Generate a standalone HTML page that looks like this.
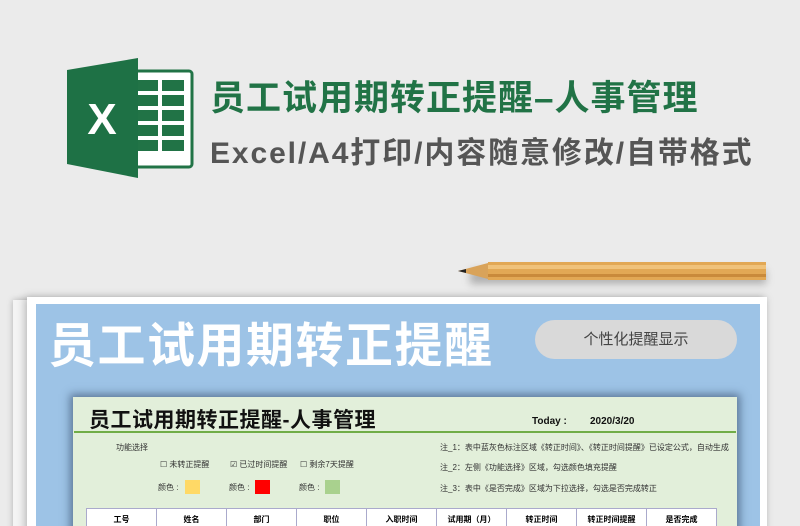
<!DOCTYPE html>
<html><head><meta charset="utf-8"><style>
*{margin:0;padding:0;box-sizing:border-box}
html,body{width:800px;height:526px;overflow:hidden}
body{background:#ebebeb;font-family:"Liberation Sans","Noto Sans CJK SC",sans-serif;position:relative}
.a{position:absolute;white-space:nowrap}
.t1{left:210px;top:70px;font-size:35px;font-weight:bold;color:#217346;letter-spacing:1px}
.t2{left:210px;top:128px;font-size:30px;font-weight:bold;color:#555;letter-spacing:1.9px}
.paper2{left:13px;top:300px;width:750px;height:240px;background:#f4f4f4;box-shadow:0 0 6px rgba(0,0,0,.25)}
.frame{left:27px;top:297px;width:740px;height:240px;background:#fff;box-shadow:-2px 0 8px rgba(0,0,0,.25)}
.blue{left:36px;top:304px;width:724px;height:230px;background:#9dc3e6}
.big{left:48px;top:306px;font-size:48px;font-weight:bold;color:#fff;letter-spacing:1.5px}
.btn{left:535px;top:320px;width:202px;height:39px;border-radius:20px;background:#d9d9d9;font-size:15px;color:#444;text-align:center;line-height:39px}
.card{left:73px;top:397px;width:664px;height:140px;background:#e2efda;box-shadow:0 0 8px 3px rgba(40,60,90,.55)}
.s{font-size:8px;color:#333}
.sw{width:15px;height:14px}
th{font-size:8px;font-weight:bold;background:#fff;border:1px solid #aac;height:30px;width:70px;text-align:center;vertical-align:top;padding-top:5px}
</style></head><body>
<svg class="a" style="left:66px;top:57px" width="128" height="122" viewBox="0 0 128 122">
<rect x="62" y="14" width="64" height="96" rx="3" fill="#fff" stroke="#217346" stroke-width="3"/>
<rect x="72" y="23" width="20" height="11" fill="#217346"/><rect x="96" y="23" width="22" height="11" fill="#217346"/>
<rect x="72" y="38" width="20" height="11" fill="#217346"/><rect x="96" y="38" width="22" height="11" fill="#217346"/>
<rect x="72" y="53" width="20" height="11" fill="#217346"/><rect x="96" y="53" width="22" height="11" fill="#217346"/>
<rect x="72" y="68" width="20" height="11" fill="#217346"/><rect x="96" y="68" width="22" height="11" fill="#217346"/>
<rect x="72" y="83" width="20" height="11" fill="#217346"/><rect x="96" y="83" width="22" height="11" fill="#217346"/>
<polygon points="1,13 72,1 72,121 1,107" fill="#1e7145"/>
<text x="36" y="77" font-family="Liberation Sans" font-weight="bold" font-size="44" fill="#fff" text-anchor="middle">X</text>
</svg>
<div class="a t1">员工试用期转正提醒–人事管理</div>
<div class="a t2">Excel/A4打印/内容随意修改/自带格式</div>
<div class="a" style="left:470px;top:270px;width:296px;height:14px;background:rgba(0,0,0,.25);filter:blur(4px)"></div>
<svg class="a" style="left:456px;top:260px" width="312" height="22"><polygon points="2,11 32,3 32,19" fill="#d9a35a"/><polygon points="2,11 10,9 10,13" fill="#222"/><rect x="32" y="2" width="278" height="18" fill="#e2a855"/><rect x="32" y="5" width="278" height="4" fill="#f0c27a"/><rect x="32" y="14" width="278" height="3" fill="#c98a3b"/></svg>
<div class="a paper2"></div>
<div class="a frame"></div>
<div class="a blue"></div>
<div class="a big">员工试用期转正提醒</div>
<div class="a btn">个性化提醒显示</div>
<div class="a card"></div>
<div class="a" style="left:89px;top:404px;font-size:21px;font-weight:bold;color:#111;letter-spacing:0.5px">员工试用期转正提醒-人事管理</div>
<div class="a" style="left:532px;top:416px;font-size:10px;font-weight:bold;color:#111">Today :</div>
<div class="a" style="left:590px;top:416px;font-size:10px;font-weight:bold;color:#111">2020/3/20</div>
<div class="a" style="left:74px;top:431px;width:662px;height:2px;background:#70ad47"></div>
<div class="a s" style="left:116px;top:442px">功能选择</div>
<div class="a s" style="left:160px;top:459px">☐ 未转正提醒</div>
<div class="a s" style="left:230px;top:459px">☑ 已过时间提醒</div>
<div class="a s" style="left:300px;top:459px">☐ 剩余7天提醒</div>
<div class="a s" style="left:158px;top:482px">颜色 :</div><div class="a sw" style="left:185px;top:480px;background:#ffd966"></div>
<div class="a s" style="left:229px;top:482px">颜色 :</div><div class="a sw" style="left:255px;top:480px;background:#f00"></div>
<div class="a s" style="left:299px;top:482px">颜色 :</div><div class="a sw" style="left:325px;top:480px;background:#a9d18e"></div>
<div class="a s" style="left:440px;top:442px">注_1：表中蓝灰色标注区域《转正时间》、《转正时间提醒》已设定公式，自动生成</div>
<div class="a s" style="left:440px;top:462px">注_2：左侧《功能选择》区域，勾选颜色填充提醒</div>
<div class="a s" style="left:440px;top:483px">注_3：表中《是否完成》区域为下拉选择，勾选是否完成转正</div>
<table class="a" style="left:86px;top:508px;border-collapse:collapse"><tr><th>工号</th><th>姓名</th><th>部门</th><th>职位</th><th>入职时间</th><th>试用期（月）</th><th>转正时间</th><th>转正时间提醒</th><th>是否完成</th></tr></table>
</body></html>
